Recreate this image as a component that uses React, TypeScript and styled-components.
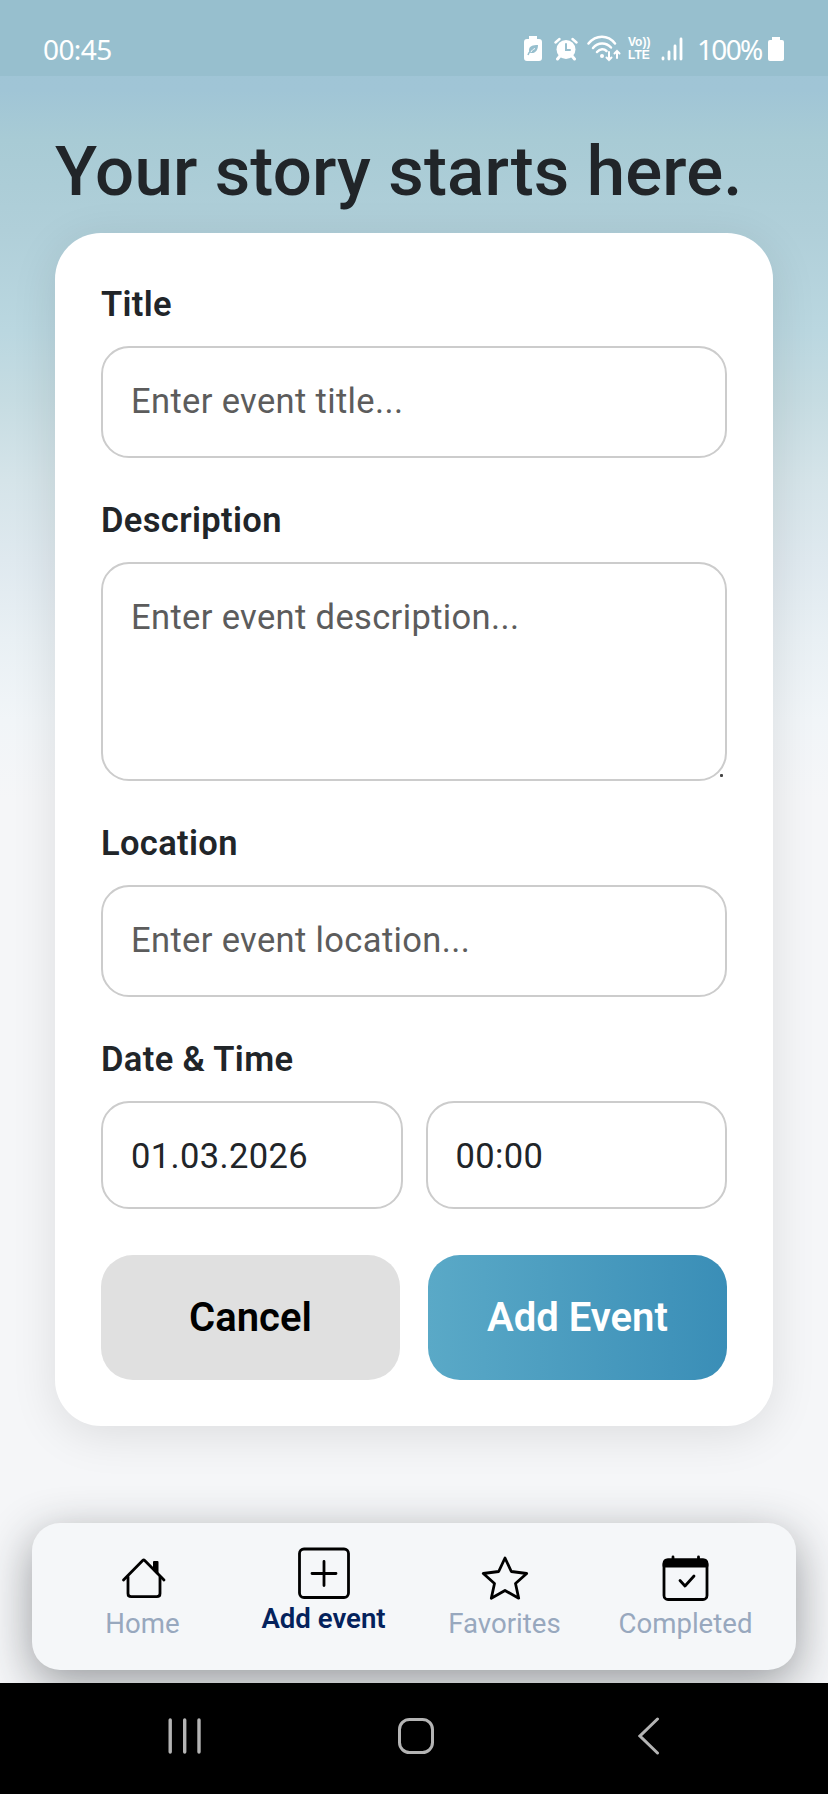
import React from "react";
import styled, { createGlobalStyle, css } from "styled-components";

const GlobalStyle = createGlobalStyle`
  *, *::before, *::after { box-sizing: border-box; }
  body { margin: 0; background: #f5f6f8; font-family: Roboto, sans-serif; color: #212529; }
  button, input, textarea { font-family: inherit; margin: 0; }
`;

const Screen = styled.div`
  width: 828px;
  height: 1794px;
  display: flex;
  flex-direction: column;
  overflow: hidden;
  background: linear-gradient(
    180deg,
    #9fc5d5 0px,
    #a0c5d6 90px,
    #a8cbd5 140px,
    #b0cfd9 230px,
    #bad7e0 330px,
    #c6dce2 400px,
    #d5e4e9 480px,
    #dfe9ef 560px,
    #e9f0f4 640px,
    #f1f5f8 720px,
    #f5f6f8 800px
  );
`;

const StatusBar = styled.header`
  height: 76px;
  flex: none;
  display: flex;
  align-items: center;
  justify-content: space-between;
  padding: 21px 44px 0 43px;
  background: #97bfce;
  color: #fff;
  font-family: "Noto Sans", sans-serif;
`;

const Clock = styled.span`
  font-size: 28px;
  line-height: 32px;
  letter-spacing: -0.6px;
`;

const StatusIcons = styled.div`
  display: flex;
  align-items: center;
  height: 32px;

  svg { display: block; flex: none; }
`;

const Percent = styled.span`
  width: 64px;
  margin: 0 7px 0 14px;
  font-size: 28px;
  line-height: 32px;
  letter-spacing: -1.7px;
  white-space: nowrap;
`;

const VoLte = styled.span`
  width: 24px;
  margin: 0 9px 0 7px;
  display: flex;
  flex-direction: column;
  font-family: "Liberation Sans", sans-serif;
  font-size: 12px;
  font-weight: 700;
  line-height: 13px;
  white-space: nowrap;
`;

const Spacer = styled.span<{ $w: number }>`
  width: ${(p) => p.$w}px;
`;

const Page = styled.main`
  height: 1607px;
  flex: none;
  display: flex;
  flex-direction: column;
  padding: 50px 55px 0;
  overflow: hidden;
`;

const Heading = styled.h1`
  margin: 0;
  height: 107px;
  font-size: 69px;
  font-weight: 500;
  line-height: 92px;
  letter-spacing: 0.14px;
  white-space: nowrap;
`;

const Card = styled.form`
  flex: none;
  height: 1193px;
  padding: 46px;
  border-radius: 46px;
  background: #fff;
  box-shadow: 0 9px 46px rgba(0, 0, 0, 0.1);
  color: #212529;
`;

const Field = styled.div<{ $gap?: number }>`
  display: flex;
  flex-direction: column;
  margin-bottom: ${(p) => p.$gap ?? 37}px;
`;

const Label = styled.label`
  height: 67px;
  padding-top: 5px;
  font-size: 34.5px;
  font-weight: 600;
  line-height: 40px;
  letter-spacing: 0.35px;
`;

const control = css`
  width: 100%;
  border: 2px solid #ccc;
  border-radius: 28px;
  background: #fff;
  padding: 0 28px 2px;
  color: #212529;
  font-size: 34.5px;
  line-height: 52px;
  letter-spacing: 0.36px;
  outline: none;

  &::placeholder { color: #5c5c5c; opacity: 1; }
`;

const TextInput = styled.input`
  ${control}
  height: 112px;
`;

const PickerInput = styled.input`
  ${control}
  height: 108px;
  padding: 1px 28px 0;
`;

const TextArea = styled.textarea`
  ${control}
  display: block;
  height: 219px;
  padding: 27px 28px;
  resize: none;
`;

const AreaBox = styled.div`
  position: relative;
`;

const Grip = styled.span`
  position: absolute;
  right: 4px;
  bottom: 4px;
  width: 3px;
  height: 3px;
  border-radius: 1px;
  background: #444;
`;

const Row = styled.div<{ $gap: number }>`
  display: grid;
  grid-template-columns: 1fr 1fr;
  gap: ${(p) => p.$gap}px;
`;

const Button = styled.button<{ $primary?: boolean }>`
  height: 125px;
  border: 0;
  border-radius: 32px;
  font-size: 40px;
  font-weight: 600;
  padding: 0 0 1px;
  color: ${(p) => (p.$primary ? "#fff" : "#000")};
  background: ${(p) => (p.$primary ? "linear-gradient(90deg, #5aa9c7, #3a8eb7)" : "#e0e0e0")};
`;

const TabBar = styled.nav`
  flex: none;
  height: 147px;
  margin: 97px -23px 0;
  padding: 0 20px;
  display: grid;
  grid-template-columns: repeat(4, 1fr);
  border-radius: 28px;
  background: #f5f7f9;
  box-shadow: 0 13px 46px rgba(33, 37, 41, 0.44);
`;

const Tab = styled.a<{ $active?: boolean }>`
  display: flex;
  flex-direction: column;
  align-items: center;
  gap: 2px;
  padding-top: ${(p) => (p.$active ? 24 : 29)}px;
  color: ${(p) => (p.$active ? "#04225c" : "#98a8be")};
  font-size: 27.6px;
  font-weight: ${(p) => (p.$active ? 600 : 400)};
  line-height: 36px;
  white-space: nowrap;

  svg { display: block; color: #000; }
`;

const SystemBar = styled.footer`
  flex: 1;
  display: flex;
  align-items: center;
  padding: 0 0 5px 165px;
  background: #000;

  svg { display: block; }
`;

const BatterySaverIcon = () => (
  <svg width="18" height="25" viewBox="0 0 18 25">
    <path d="M5 0h8v3h2a3 3 0 0 1 3 3v16a3 3 0 0 1-3 3H3a3 3 0 0 1-3-3V6a3 3 0 0 1 3-3h2z" fill="#fff" />
    <path d="M14 9c-5 0-9 1-9 5 0 1 .4 2 1 2.500C8 18 14 17 14 9z" fill="#97bfce" />
    <path d="M4 19c1-3 3-5 6-6" stroke="#97bfce" strokeWidth="1.500" fill="none" />
    <path d="M7 16c1-2 2-2.500 4-3.500" stroke="#fff" strokeWidth="1" fill="none" />
  </svg>
);

const AlarmIcon = () => (
  <svg width="24" height="24" viewBox="0 0 24 24" fill="none" stroke="#fff" strokeLinecap="round">
    <circle cx="12" cy="12.500" r="9.500" fill="#fff" stroke="none" />
    <path d="M1.500 5.500 5.500 2M22.500 5.500 18.500 2" strokeWidth="2.400" />
    <path d="m6 19-2.500 3M18 19l2.500 3" strokeWidth="3" />
    <path d="M12 7v6h4" stroke="#97bfce" strokeWidth="2" />
  </svg>
);

const WifiIcon = () => (
  <svg width="34" height="27" viewBox="0 0 34 27" fill="none" stroke="#fff" strokeWidth="2.500" strokeLinecap="round">
    <path d="M1.500 8.500C9-.5 21-.5 28 8.500" />
    <path d="M6 13c5-6 13-6 18-.5" />
    <path d="M10 17c3-3.500 7-3.500 9.500-1" />
    <circle cx="15" cy="21" r="2" fill="#fff" stroke="none" />
    <path d="M22 17v8m-2.500-2.500L22 25l2.500-2.500M30 23v-7m-2.500 2.500L30 16l2.500 2.500" strokeWidth="2" />
  </svg>
);

const SignalIcon = () => (
  <svg width="22" height="24" viewBox="0 0 22 24" stroke="#fff" strokeWidth="2.800" strokeLinecap="round">
    <path d="M2 21v1M8 15v7M14 9v13M20 2v20" />
  </svg>
);

const BatteryIcon = () => (
  <svg width="16" height="24" viewBox="0 0 16 24">
    <path d="M4 0h8v3h2a2 2 0 0 1 2 2v17a2 2 0 0 1-2 2H2a2 2 0 0 1-2-2V5a2 2 0 0 1 2-2h2z" fill="#fff" />
  </svg>
);

const HomeIcon = () => (
  <svg width="52" height="52" viewBox="0 0 52 52" fill="none" stroke="#000" strokeWidth="2.800" strokeLinecap="round" strokeLinejoin="round">
    <path d="M6.500 28 25.700 8.500q1-1 2 0L47 28" />
    <path d="M11 25V41.500q0 3.200 3.200 3.200h25.600q3.200 0 3.200-3.200V25" />
    <path d="M37 10h3.500v11.500L37 18z" fill="#000" strokeWidth="2" />
  </svg>
);

const PlusSquareIcon = () => (
  <svg width="52" height="52" viewBox="0 0 52 52" fill="none" stroke="#000" strokeWidth="2.800" strokeLinecap="round">
    <rect x="1.500" y="2" width="49" height="48.500" rx="4.500" />
    <path d="M26 14.500v24M14 26.500h24" />
  </svg>
);

const StarIcon = () => (
  <svg width="52" height="52" viewBox="0 0 52 52" fill="none" stroke="#000" strokeWidth="2.800" strokeLinejoin="round">
    <path d="m26 6 6.300 13.500 15.400 2-11.200 10 3.200 14.700L26 38.500l-13.700 7.700 3.200-14.700-11.200-10 15.400-2z" />
  </svg>
);

const CalendarCheckIcon = () => (
  <svg width="52" height="52" viewBox="0 0 52 52" fill="none" stroke="#000" strokeWidth="2.800" strokeLinecap="round" strokeLinejoin="round">
    <rect x="4" y="8" width="43" height="39.500" rx="4" />
    <path d="M4 14V12q0-4 4-4h35q4 0 4 4v2z" fill="#000" />
    <path d="M13 5V10M38.500 5V10" />
    <path d="m20 28.500 5 5.500 9-10" />
  </svg>
);

const RecentsIcon = () => (
  <svg width="36" height="36" viewBox="0 0 36 36" stroke="#b4b4b4" strokeWidth="3.400" strokeLinecap="round">
    <path d="M5.200 2v32M19.700 2v32M34 2v32" />
  </svg>
);

const HomeButtonIcon = () => (
  <svg width="36" height="36" viewBox="0 0 36 36" fill="none" stroke="#b4b4b4" strokeWidth="3">
    <rect x="1.500" y="1.500" width="33" height="33" rx="10" />
  </svg>
);

const BackIcon = () => (
  <svg width="22" height="38" viewBox="0 0 22 38" fill="none" stroke="#b4b4b4" strokeWidth="3" strokeLinecap="round">
    <path d="M19.500 2 2 19l17.500 17" />
  </svg>
);

const tabs = [
  { label: "Home", Icon: HomeIcon },
  { label: "Add event", Icon: PlusSquareIcon, active: true },
  { label: "Favorites", Icon: StarIcon },
  { label: "Completed", Icon: CalendarCheckIcon },
];

export default function App() {
  return (
    <Screen>
      <GlobalStyle />
      <StatusBar>
        <Clock>00:45</Clock>
        <StatusIcons>
          <BatterySaverIcon />
          <Spacer $w={12} />
          <AlarmIcon />
          <Spacer $w={9} />
          <WifiIcon />
          <VoLte>
            <span>Vo))</span>
            <span>LTE</span>
          </VoLte>
          <SignalIcon />
          <Percent>100%</Percent>
          <BatteryIcon />
        </StatusIcons>
      </StatusBar>
      <Page>
        <Heading>Your story starts here.</Heading>
        <Card>
          <Field>
            <Label htmlFor="title">Title</Label>
            <TextInput id="title" placeholder="Enter event title..." />
          </Field>
          <Field>
            <Label htmlFor="description">Description</Label>
            <AreaBox>
              <TextArea id="description" placeholder="Enter event description..." />
              <Grip />
            </AreaBox>
          </Field>
          <Field>
            <Label htmlFor="location">Location</Label>
            <TextInput id="location" placeholder="Enter event location..." />
          </Field>
          <Field $gap={46}>
            <Label htmlFor="date">Date &amp; Time</Label>
            <Row $gap={23}>
              <PickerInput id="date" defaultValue="01.03.2026" />
              <PickerInput defaultValue="00:00" aria-label="Time" />
            </Row>
          </Field>
          <Row $gap={28}>
            <Button type="button">Cancel</Button>
            <Button type="button" $primary>Add Event</Button>
          </Row>
        </Card>
        <TabBar>
          {tabs.map(({ label, Icon, active }) => (
            <Tab key={label} $active={active}>
              <Icon />
              {label}
            </Tab>
          ))}
        </TabBar>
      </Page>
      <SystemBar>
        <RecentsIcon />
        <Spacer $w={197} />
        <HomeButtonIcon />
        <Spacer $w={204} />
        <BackIcon />
      </SystemBar>
    </Screen>
  );
}
